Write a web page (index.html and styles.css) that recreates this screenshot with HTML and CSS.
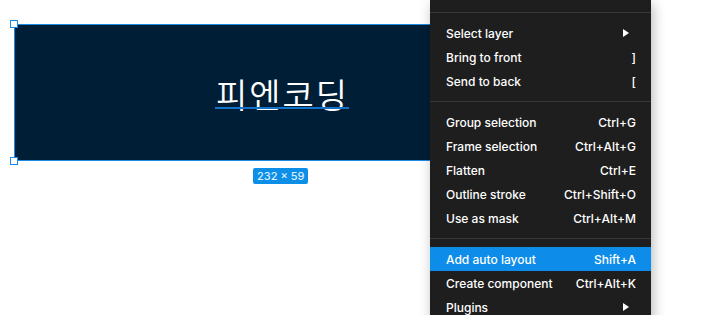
FILE: index.html
```html
<!DOCTYPE html>
<html lang="ko">
<head>
  <meta charset="UTF-8" />
  <title>Canvas</title>
  <link rel="stylesheet" href="styles.css">
</head>
<body>
  <div class="canvas">
    <div class="frame">
      <span class="frame-text">피엔코딩</span>
      <span class="handle handle-tl"></span>
      <span class="handle handle-bl"></span>
      <span class="size-label">232 × 59</span>
    </div>

    <div class="menu">
      <div class="sep"></div>
      <div class="item"><span>Select layer</span><span class="arrow"></span></div>
      <div class="item"><span>Bring to front</span><span class="key">]</span></div>
      <div class="item"><span>Send to back</span><span class="key">[</span></div>
      <div class="sep"></div>
      <div class="item"><span>Group selection</span><span class="key">Ctrl+G</span></div>
      <div class="item"><span>Frame selection</span><span class="key">Ctrl+Alt+G</span></div>
      <div class="item"><span>Flatten</span><span class="key">Ctrl+E</span></div>
      <div class="item"><span>Outline stroke</span><span class="key">Ctrl+Shift+O</span></div>
      <div class="item"><span>Use as mask</span><span class="key">Ctrl+Alt+M</span></div>
      <div class="sep"></div>
      <div class="item active"><span>Add auto layout</span><span class="key">Shift+A</span></div>
      <div class="item"><span>Create component</span><span class="key">Ctrl+Alt+K</span></div>
      <div class="item"><span>Plugins</span><span class="arrow"></span></div>
    </div>
  </div>
</body>
</html>
```

FILE: styles.css
```css
body {
  margin: 0;
  background: #fff;
  font-family: Inter, 'Noto Sans', sans-serif;
  overflow: hidden;
}

.canvas {
  position: relative;
  width: 727px;
  height: 315px;
  overflow: hidden;
}

.frame {
  position: absolute;
  left: 14px;
  top: 24px;
  width: 534px;
  height: 135px;
  background: #001e36;
  border: 1px solid #1b8ae6;
  display: flex;
  align-items: center;
  justify-content: center;
}

.frame-text {
  position: relative;
  color: #fff;
  font-family: 'Noto Sans CJK KR', sans-serif;
  font-size: 34px;
  font-weight: 350;
  line-height: 40px;
  letter-spacing: 2px;
  margin-left: 1px;
  margin-top: 2px;
}

.frame-text::after {
  content: "";
  position: absolute;
  left: -1px;
  right: 0;
  bottom: 5px;
  height: 2px;
  background: #1472c9;
}

.handle {
  position: absolute;
  width: 6px;
  height: 6px;
  background: #fff;
  border: 1px solid #1b8ae6;
}

.handle-tl { left: -5px; top: -5px; }
.handle-bl { left: -5px; bottom: -5px; }

.size-label {
  position: absolute;
  top: 143px;
  left: 238px;
  background: #0d8fe8;
  color: #dcefff;
  font-size: 11px;
  font-weight: 500;
  line-height: 16px;
  padding: 0 4px;
  border-radius: 2px;
}

.menu {
  position: absolute;
  left: 430px;
  top: 0;
  width: 221px;
  background: #1e1e1e;
  padding: 12px 0 20px;
  box-shadow: 2px 4px 12px rgba(0, 0, 0, 0.28);
  color: #fff;
  font-size: 12px;
  font-weight: 500;
}

.sep {
  height: 1px;
  background: #383838;
  margin: 0 0 8px;
}

.item + .sep {
  margin-top: 8px;
}

.item {
  display: flex;
  justify-content: space-between;
  align-items: center;
  height: 24px;
  padding: 0 15px 0 16px;
}

.item.active {
  background: #0d8ce9;
}

.arrow {
  width: 0;
  height: 0;
  border-left: 6px solid #fff;
  border-top: 4px solid transparent;
  border-bottom: 4px solid transparent;
  margin-right: 7px;
}
```
